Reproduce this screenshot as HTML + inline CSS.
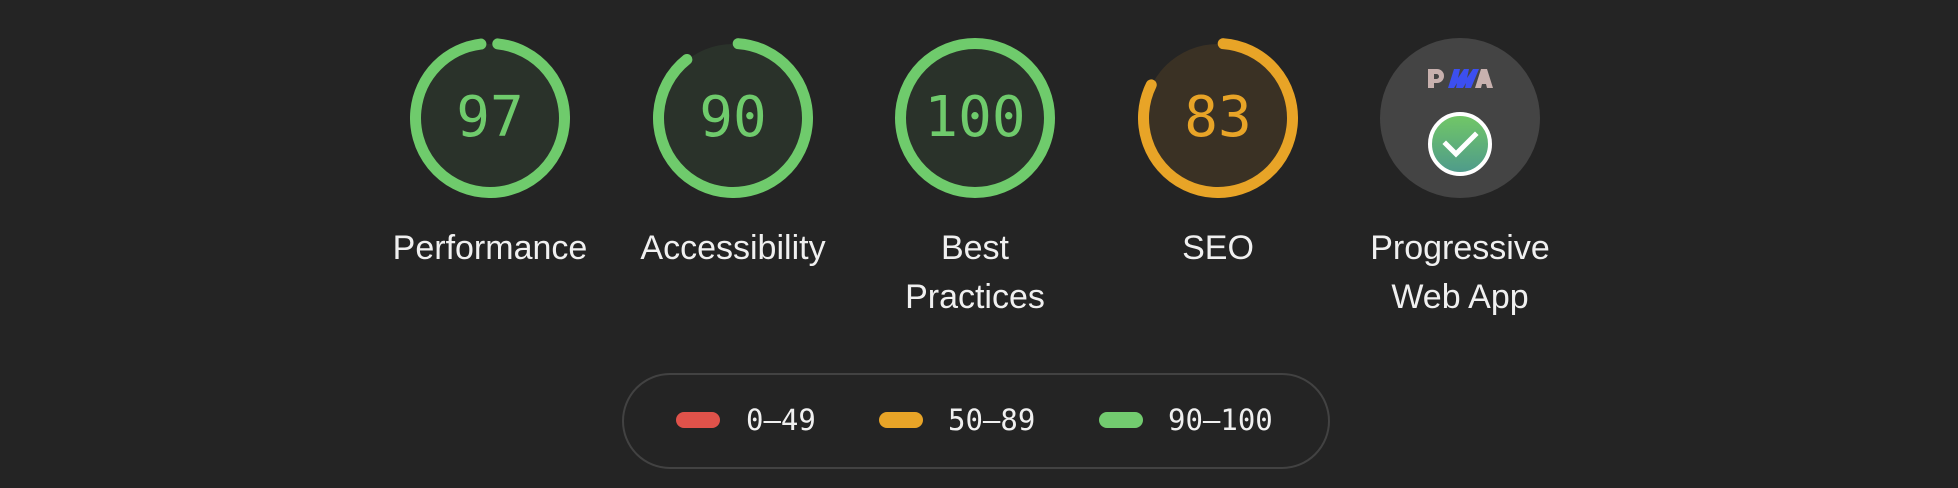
<!DOCTYPE html>
<html><head><meta charset="utf-8"><style>
html,body{margin:0;padding:0;background:#242424;width:1958px;height:488px;overflow:hidden;position:relative;font-family:"Liberation Sans",sans-serif}
.g{position:absolute;top:38px;width:160px;height:160px}
.num{position:absolute;top:0;left:0;width:160px;height:160px;line-height:160px;text-align:center;font-family:"DejaVu Sans Mono","Liberation Mono",monospace;font-size:56px}
.lbl{position:absolute;top:224px;width:260px;text-align:center;color:#f0f0f0;font-size:34px;line-height:49px}
.legend{position:absolute;left:622px;top:373px;width:704px;height:92px;border:2px solid #424242;border-radius:48px}
.sw{position:absolute;top:412px;width:44px;height:16px;border-radius:8px}
.lt{position:absolute;top:400px;color:#f0f0f0;font-family:"DejaVu Sans Mono","Liberation Mono",monospace;font-size:29px;line-height:40px}
</style></head><body>

<svg class="g" style="left:410px" viewBox="0 0 160 160"><circle cx="80" cy="80" r="74" fill="#2a322a"/><circle cx="80" cy="80" r="74.5" fill="none" stroke="#6fcb6c" stroke-width="11" stroke-linecap="round" stroke-dasharray="451 1000" transform="rotate(-84 80 80)"/></svg>
<div class="num" style="left:410px;top:38px;color:#6fcb6c">97</div>

<svg class="g" style="left:653px" viewBox="0 0 160 160"><circle cx="80" cy="80" r="74" fill="#2a322a"/><circle cx="80" cy="80" r="74.5" fill="none" stroke="#6fcb6c" stroke-width="11" stroke-linecap="round" stroke-dasharray="413 1000" transform="rotate(-86 80 80)"/></svg>
<div class="num" style="left:653px;top:38px;color:#6fcb6c">90</div>

<svg class="g" style="left:895px" viewBox="0 0 160 160"><circle cx="80" cy="80" r="74" fill="#2a322a"/><circle cx="80" cy="80" r="74.5" fill="none" stroke="#6fcb6c" stroke-width="11"/></svg>
<div class="num" style="left:895px;top:38px;color:#6fcb6c">100</div>

<svg class="g" style="left:1138px" viewBox="0 0 160 160"><circle cx="80" cy="80" r="74" fill="#3a3124"/><circle cx="80" cy="80" r="74.5" fill="none" stroke="#e8a427" stroke-width="11" stroke-linecap="round" stroke-dasharray="380 1000" transform="rotate(-86 80 80)"/></svg>
<div class="num" style="left:1138px;top:38px;color:#e8a427">83</div>

<svg class="g" style="left:1380px" viewBox="0 0 160 160">
<defs><linearGradient id="cg" x1="0" y1="0" x2="0" y2="1"><stop offset="0" stop-color="#72c865"/><stop offset="1" stop-color="#4e9a8c"/></linearGradient></defs>
<circle cx="80" cy="80" r="80" fill="#444"/>
<path fill-rule="evenodd" d="M48 31h9a7 7 0 0 1 0 14h-3v5h-6z M54 36v5h2.5a2.5 2.5 0 0 0 0-5z" fill="#c8b1ae"/>
<polygon points="95,50 101,31 107,31 113,50 107,50 106,46 102,46 101,50" fill="#c8b1ae"/>
<polygon points="68,50 74,31 80,31 78,40 84,31 89,31 87,40 93,31 99,31 91,50 85,50 86,45 83,50 76,50 77,45 74,50" fill="#3c4ff0"/>
<circle cx="80" cy="106" r="30" fill="url(#cg)" stroke="#fff" stroke-width="4"/>
<path d="M66 106 L76 116 L95 97" fill="none" stroke="#fff" stroke-width="5" stroke-linecap="square"/>
</svg>

<div class="lbl" style="left:360px">Performance</div>
<div class="lbl" style="left:603px">Accessibility</div>
<div class="lbl" style="left:845px">Best<br>Practices</div>
<div class="lbl" style="left:1088px">SEO</div>
<div class="lbl" style="left:1330px">Progressive<br>Web App</div>

<div class="legend"></div>
<div class="sw" style="left:676px;background:#e0524a"></div><div class="lt" style="left:746px">0–49</div>
<div class="sw" style="left:879px;background:#e8a427"></div><div class="lt" style="left:948px">50–89</div>
<div class="sw" style="left:1099px;background:#72cb6f"></div><div class="lt" style="left:1168px">90–100</div>
</body></html>
